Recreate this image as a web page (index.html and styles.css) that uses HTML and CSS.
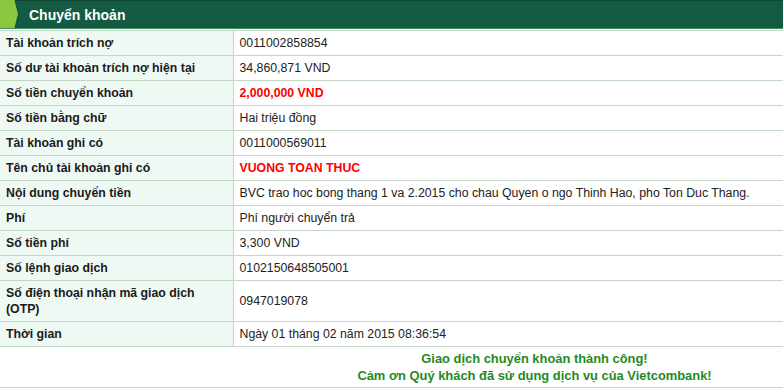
FILE: index.html
```html
<!DOCTYPE html>
<html>
<head>
    <meta charset="utf-8">
    <title>Chuyển khoản</title>
    <link rel="stylesheet" href="styles.css">
</head>
<body>
    <div class="panel">
        <div class="panel-header">
            <svg class="tab-mark" width="20" height="28" viewBox="0 0 20 28">
                <polygon points="0,0 15,0 18.5,14 15,28 0,28" fill="#8dc641"/>
                <polyline points="15,0 18.5,14 15,28" fill="none" stroke="#0f4a35" stroke-width="1"/>
            </svg>
            <h1>Chuyển khoản</h1>
        </div>

        <table class="detail-table">
            <tr>
                <th>Tài khoản trích nợ</th>
                <td>0011002858854</td>
            </tr>
            <tr>
                <th>Số dư tài khoản trích nợ hiện tại</th>
                <td>34,860,871 VND</td>
            </tr>
            <tr>
                <th>Số tiền chuyển khoản</th>
                <td class="highlight">2,000,000 VND</td>
            </tr>
            <tr>
                <th>Số tiền bằng chữ</th>
                <td>Hai triệu đồng</td>
            </tr>
            <tr>
                <th>Tài khoản ghi có</th>
                <td>0011000569011</td>
            </tr>
            <tr>
                <th>Tên chủ tài khoản ghi có</th>
                <td class="highlight">VUONG TOAN THUC</td>
            </tr>
            <tr>
                <th>Nội dung chuyển tiền</th>
                <td>BVC trao hoc bong thang 1 va 2.2015 cho chau Quyen o ngo Thinh Hao, pho Ton Duc Thang.</td>
            </tr>
            <tr>
                <th>Phí</th>
                <td>Phí người chuyển trả</td>
            </tr>
            <tr>
                <th>Số tiền phí</th>
                <td>3,300 VND</td>
            </tr>
            <tr>
                <th>Số lệnh giao dịch</th>
                <td>0102150648505001</td>
            </tr>
            <tr>
                <th>Số điện thoại nhận mã giao dịch (OTP)</th>
                <td>0947019078</td>
            </tr>
            <tr>
                <th>Thời gian</th>
                <td>Ngày 01 tháng 02 năm 2015 08:36:54</td>
            </tr>
            <tr class="result-row">
                <td class="blank"></td>
                <td class="result">Giao dịch chuyển khoản thành công!<br>Cảm ơn Quý khách đã sử dụng dịch vụ của Vietcombank!</td>
            </tr>
        </table>
    </div>
</body>
</html>
```

FILE: styles.css
```css
* {
    box-sizing: border-box;
}

body {
    margin: 0;
    font-family: "Liberation Sans", Arial, sans-serif;
    font-size: 12.3px;
    color: #222;
    background: #fff;
}

.panel {
    width: 100%;
}

.panel-header {
    display: flex;
    align-items: center;
    height: 29px;
    background: #135b42;
    border-top: 1px solid #0c4631;
    border-bottom: 1px solid #3f8566;
}

.tab-mark {
    display: block;
    flex: none;
    margin-top: -1px;
}

.panel-header h1 {
    margin: 0 0 0 9px;
    font-size: 14px;
    font-weight: bold;
    color: #fff;
}

.detail-table {
    width: 100%;
    table-layout: fixed;
    border-collapse: collapse;
    margin-top: 1px;
    border-top: 1px solid #c3d8c4;
}

.detail-table th,
.detail-table td {
    padding: 4px 5px 4px 6px;
    line-height: 16px;
    border-bottom: 1px solid #c3d8c4;
    vertical-align: middle;
    text-align: left;
}

.detail-table th {
    width: 233px;
    padding-right: 20px;
    font-weight: bold;
    color: #1a1a1a;
    background: #eef9f4;
    border-right: 1px solid #c3d8c4;
}

.detail-table td {
    color: #222;
}

.detail-table .highlight {
    color: #f00;
    font-weight: bold;
}

.result-row .blank {
    background: #fff;
    border-right: none;
}

.detail-table .result {
    text-align: center;
    font-size: 12.9px;
    font-weight: bold;
    color: #1f8a1f;
    line-height: 17px;
    padding: 3px 5px 3px 58px;
}
```
